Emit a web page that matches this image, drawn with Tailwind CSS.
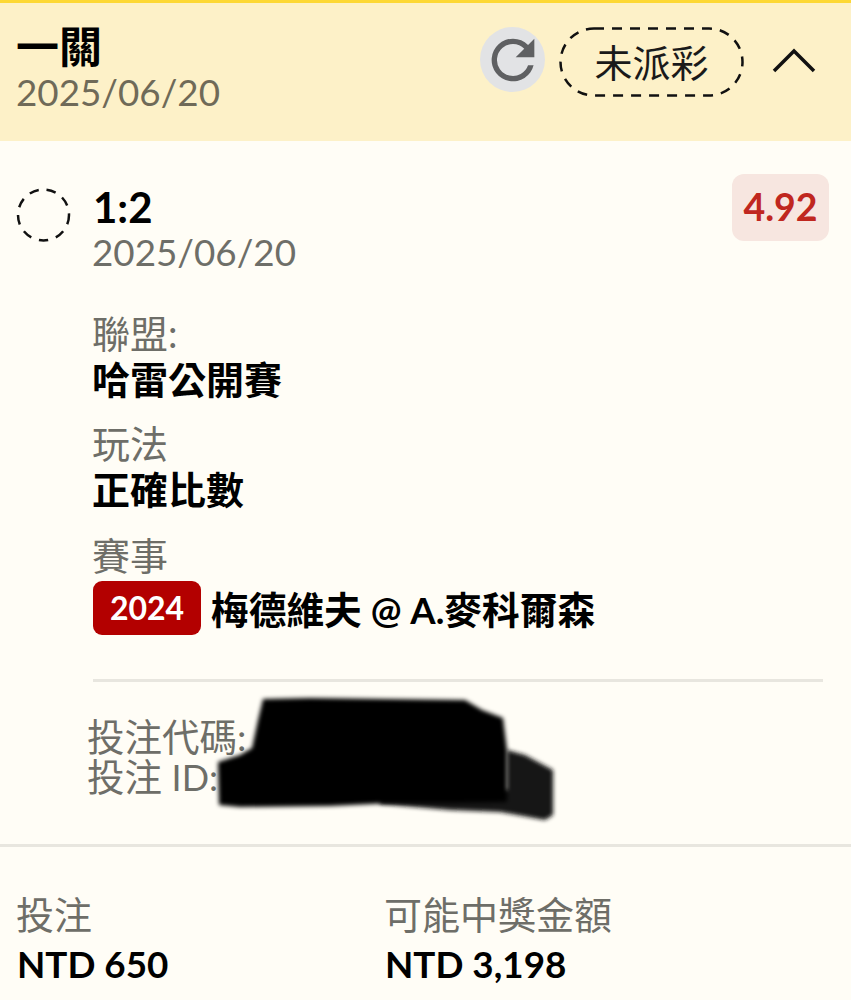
<!DOCTYPE html>
<html lang="zh-Hant">
  <head>
    <meta charset="UTF-8" />
    <meta name="viewport" content="width=device-width, initial-scale=1.0" />
    <title>投注紀錄</title>
    <script src="https://cdn.jsdelivr.net/npm/@tailwindcss/browser@4"></script>
  </head>
  <body class="bg-[#fffdf6] font-['Lato','Noto_Sans_CJK_TC',sans-serif] text-black overflow-hidden">
    <div class="relative w-[851px] h-[1000px] overflow-hidden">
      <!-- header -->
      <header class="h-[141px] border-t-[3px] border-[#fdd835] bg-[#fdf1c8] pl-[16px] pr-[35px] flex justify-between">
        <div class="pt-[20px]">
          <div class="text-[43px] leading-[48px] font-bold">一關</div>
          <div class="text-[36.8px] leading-[42px] text-[#6f6a58]">2025/06/20</div>
        </div>
        <div class="flex items-start pt-[24px]">
          <div class="w-[65px] h-[65px] rounded-full bg-[#e2e3e5] flex items-center justify-center">
            <svg width="64" height="64" viewBox="0 0 24 24" fill="#5f6062">
              <path d="M17.65 6.35A7.96 7.96 0 0 0 12 4a8 8 0 1 0 7.73 10h-2.08A6 6 0 1 1 12 6c1.66 0 3.14.69 4.22 1.78L13 11h7V4l-2.35 2.35z" />
            </svg>
          </div>
          <div class="relative ml-[14px] w-[185px] h-[70px] flex items-center justify-center text-[38px] text-[#1a1a1a]">
            <svg class="absolute inset-0" width="185" height="70" fill="none" stroke="#111" stroke-width="2.5" stroke-dasharray="10 8">
              <rect x="1.5" y="1.5" width="182" height="67" rx="33.5" />
            </svg>
            <span class="relative pt-[1px]">未派彩</span>
          </div>
          <svg class="ml-[28px] mt-[20px]" width="44" height="26" viewBox="0 0 44 26" fill="none" stroke="#111" stroke-width="3.5">
            <path d="M2 24 22 4l20 20" />
          </svg>
        </div>
      </header>

      <!-- selection -->
      <section class="pl-[16px] pr-[16px] pt-[33px] flex">
        <svg class="mt-[14px] shrink-0" width="55" height="54" fill="none" stroke="#111" stroke-width="2.5" stroke-dasharray="9.5 8">
          <circle cx="27.5" cy="27" r="25.5" />
        </svg>
        <div class="ml-[21px] flex-1">
          <div class="flex justify-between items-start pr-[6px]">
            <div>
              <div class="pl-[1px] pt-[9px] text-[42px] leading-[48px] font-bold">1:2</div>
              <div class="text-[36.8px] leading-[42px] text-[#6e6e68]">2025/06/20</div>
            </div>
            <div class="w-[97px] h-[67px] rounded-[12px] bg-[#f7e6e0] flex items-center justify-center text-[37.5px] font-bold text-[#c0271f]">4.92</div>
          </div>
          <div class="mt-[38px] text-[38px] leading-[44px] text-[#6e6e68]">聯盟:</div>
          <div class="text-[38px] leading-[48px] font-bold">哈雷公開賽</div>
          <div class="mt-[18px] text-[38px] leading-[44px] text-[#6e6e68]">玩法</div>
          <div class="text-[38px] leading-[48px] font-bold">正確比數</div>
          <div class="mt-[20px] text-[38px] leading-[44px] text-[#6e6e68]">賽事</div>
          <div class="mt-[4px] ml-[1px] h-[54px] flex items-center gap-[10px]">
            <span class="w-[108px] h-[54px] rounded-[9px] bg-[#b30000] flex items-center justify-center text-[32px] font-bold text-white">2024</span>
            <span class="pt-[4px] text-[36.5px] leading-[50px] font-bold"><span class="text-[37.7px]">梅德維夫</span> @ A.<span class="text-[37.7px]">麥科爾森</span></span>
          </div>
        </div>
      </section>

      <!-- bet ids -->
      <div class="ml-[93px] mr-[28px] mt-[44px] border-t-[3px] border-[#e8e6df]"></div>
      <div class="pl-[87px] pt-[35px] h-[165px] text-[37.5px] leading-[40px] text-[#6e6e68] border-b-[3px] border-[#e8e6df]">
        <div>投注代碼:</div>
        <div>投注 <span class="text-[36px]">ID:</span></div>
      </div>

      <!-- redacted area -->
      <svg class="absolute left-[210px] top-[690px]" width="355" height="140" viewBox="0 0 355 140">
        <defs>
          <filter id="soft"><feGaussianBlur stdDeviation="2" /></filter>
        </defs>
        <path filter="url(#soft)" fill="#161616" d="M297 60 315 65 343 80 343 125 335 130 290 122 240 120 170 114 170 100 297 100Z" />
        <path filter="url(#soft)" fill="#000" d="M53 9 100 8 255 10 272 20 293 28 297 60 297 112 240 113 183 113 120 116 30 117 9 115 8 72 30 65 42 58 48 30Z" />
      </svg>

      <!-- totals -->
      <section class="pl-[16px] pt-[45px] grid grid-cols-[368px_1fr]">
        <div>
          <div class="text-[38px] leading-[44px] text-[#6e6e68]">投注</div>
          <div class="pl-[1px] text-[36.8px] leading-[56px] font-bold">NTD 650</div>
        </div>
        <div>
          <div class="text-[38px] leading-[44px] text-[#6e6e68]">可能中獎金額</div>
          <div class="pl-[1px] text-[36.8px] leading-[56px] font-bold">NTD 3,198</div>
        </div>
      </section>
    </div>
  </body>
</html>
